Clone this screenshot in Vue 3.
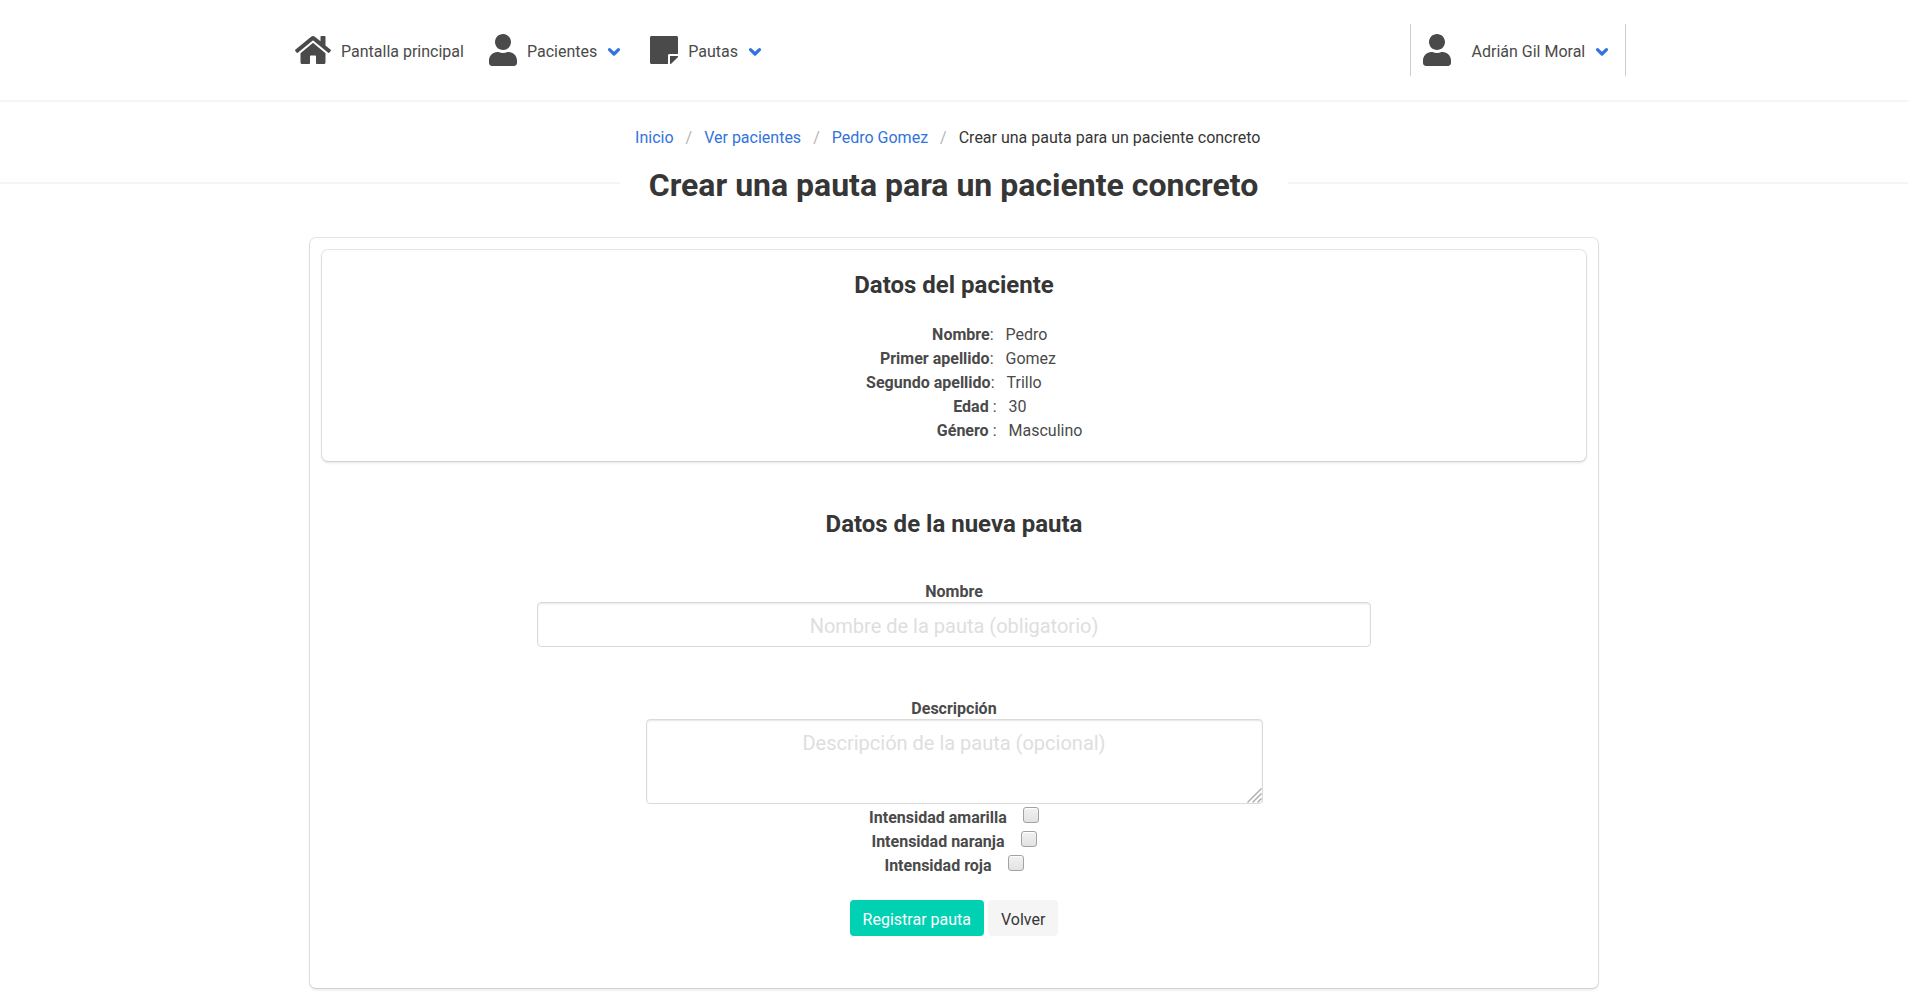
<script setup>
const icons = {
  home: {
    w: 576,
    d: 'M488 312.7V456c0 13.3-10.7 24-24 24H348c-6.6 0-12-5.4-12-12V356c0-6.6-5.4-12-12-12h-72c-6.6 0-12 5.4-12 12v112c0 6.6-5.4 12-12 12H112c-13.3 0-24-10.7-24-24V312.7c0-3.6 1.6-7 4.4-9.3l188-154.8c4.4-3.6 10.8-3.6 15.3 0l188 154.8c2.7 2.3 4.3 5.7 4.3 9.3zm83.6-60.9L488 182.9V44.4c0-6.6-5.4-12-12-12h-56c-6.6 0-12 5.4-12 12V117l-89.5-73.7c-17.7-14.6-43.3-14.6-61 0L4.4 251.8c-5.1 4.2-5.8 11.8-1.6 16.9l25.5 31c4.2 5.1 11.8 5.8 16.9 1.6l235.2-193.7c4.4-3.6 10.8-3.6 15.3 0l235.2 193.7c5.1 4.2 12.7 3.5 16.9-1.6l25.5-31c4.2-5.2 3.4-12.7-1.7-16.9z',
  },
  user: {
    w: 448,
    d: 'M224 256c70.7 0 128-57.3 128-128S294.7 0 224 0 96 57.3 96 128s57.3 128 128 128zm89.6 32h-16.7c-22.2 10.2-46.9 16-72.9 16s-50.6-5.8-72.9-16h-16.7C60.2 288 0 348.2 0 422.4V464c0 26.5 21.5 48 48 48h352c26.5 0 48-21.5 48-48v-41.6c0-74.2-60.2-134.4-134.4-134.4z',
  },
  note: {
    w: 448,
    d: 'M312 320h136V56c0-13.3-10.7-24-24-24H24C10.7 32 0 42.7 0 56v400c0 13.3 10.7 24 24 24h264V344c0-13.2 10.8-24 24-24zm129 55l-98 98c-4.5 4.5-10.6 7-17 7h-6V352h128v6.1c0 6.3-2.5 12.4-7 16.9z',
  },
}

const menu = [
  { text: 'Pantalla principal', icon: 'home', arrow: false },
  { text: 'Pacientes', icon: 'user', arrow: true },
  { text: 'Pautas', icon: 'note', arrow: true },
]

const crumbs = ['Inicio', 'Ver pacientes', 'Pedro Gomez']

const patient = [
  { label: 'Nombre', sep: ':', value: 'Pedro', end: 993.5 },
  { label: 'Primer apellido', sep: ':', value: 'Gomez', end: 993.5 },
  { label: 'Segundo apellido', sep: ':', value: 'Trillo', end: 994.5 },
  { label: 'Edad', sep: ' :', value: '30', end: 996.5 },
  { label: 'Género', sep: ' :', value: 'Masculino', end: 996.5 },
]

const intensities = ['amarilla', 'naranja', 'roja']
</script>

<template>
  <div class="page">
    <nav class="navbar">
      <div class="container">
        <a v-for="m in menu" :key="m.text" class="item" :class="m.icon">
          <svg class="icon" :viewBox="`0 0 ${icons[m.icon].w} 512`"><path :d="icons[m.icon].d" /></svg>
          <span>{{ m.text }}</span>
          <svg v-if="m.arrow" class="arrow" viewBox="0 0 14 10"><path d="M2.5 2.6L7 7L11.5 2.6" /></svg>
        </a>
        <a class="item account">
          <svg class="icon" viewBox="0 0 448 512"><path :d="icons.user.d" /></svg>
          <span>Adrián Gil Moral</span>
          <svg class="arrow" viewBox="0 0 14 10"><path d="M2.5 2.6L7 7L11.5 2.6" /></svg>
        </a>
      </div>
    </nav>

    <ul class="breadcrumb">
      <li v-for="c in crumbs" :key="c"><a>{{ c }}</a></li>
      <li class="active">Crear una pauta para un paciente concreto</li>
    </ul>

    <header class="heading">
      <hr />
      <h1>Crear una pauta para un paciente concreto</h1>
      <hr />
    </header>

    <main class="box outer">
      <section class="box patient">
        <h2>Datos del paciente</h2>
        <div v-for="p in patient" :key="p.label" class="row">
          <div class="label" :style="{ width: p.end - 322 + 'px' }"><b>{{ p.label }}</b>{{ p.sep }}</div>
          <div class="value">{{ p.value }}</div>
        </div>
      </section>

      <form class="form" @submit.prevent>
        <h2>Datos de la nueva pauta</h2>
        <label class="caption name-caption">Nombre</label>
        <input class="input" type="text" placeholder="Nombre de la pauta (obligatorio)" />
        <label class="caption desc-caption">Descripción</label>
        <div class="area">
          <textarea class="input" placeholder="Descripción de la pauta (opcional)"></textarea>
          <svg class="grip" viewBox="0 0 15 15"><path d="M0.5 14.5L14.5 0.5M5.5 14.5L14.5 5.5M10.5 14.5L14.5 10.5" /></svg>
        </div>
        <label v-for="i in intensities" :key="i" class="check">
          <b>Intensidad {{ i }}</b>
          <input type="checkbox" />
        </label>
        <div class="buttons">
          <button class="button primary">Registrar pauta</button>
          <button class="button">Volver</button>
        </div>
      </form>
    </main>
  </div>
</template>

<style>
html {
  background: #fff;
  overflow: hidden;
}
</style>

<style scoped>
.page {
  width: 1908px;
  height: 1000px;
  font: 16px/24px Roboto, sans-serif;
  color: #4a4a4a;
}
.page * {
  box-sizing: border-box;
}
.navbar {
  height: 100px;
  box-shadow: 0 2px 0 0 #f5f5f5;
}
.container {
  width: 1344px;
  height: 100px;
  margin: 0 auto;
  display: flex;
  align-items: center;
}
.item {
  display: flex;
  align-items: center;
  height: 52px;
  padding: 0 12px 0 13px;
  white-space: nowrap;
}
.item span {
  padding-top: 3px;
}
.icon {
  display: block;
  width: 28px;
  height: 32px;
  margin-right: 10px;
  fill: #4a4a4a;
}
.home .icon {
  width: 36px;
}
.arrow {
  width: 14px;
  height: 10px;
  margin: 3px -2px 0 10px;
  fill: none;
  stroke: #3273dc;
  stroke-width: 3.2;
  stroke-linecap: round;
  stroke-linejoin: round;
}
.user,
.note {
  padding-right: 18px;
}
.account {
  width: 216px;
  margin-left: auto;
  border-left: 1px solid #ccc;
  border-right: 1px solid #ccc;
  padding: 0 0 0 12px;
}
.account .icon {
  margin-right: 20.5px;
}
.breadcrumb {
  list-style: none;
  margin: 0;
  padding: 26px 12.5px 0 0;
  display: flex;
  justify-content: center;
  height: 62px;
}
.breadcrumb li {
  padding: 0 12px 0 0;
}
.breadcrumb li:last-child {
  padding: 0;
}
.breadcrumb li + li::before {
  content: '/';
  color: #b5b5b5;
  margin-right: 12px;
}
.breadcrumb a {
  color: #3273dc;
}
.active {
  color: #363636;
}
.heading {
  display: flex;
  height: 44px;
}
.heading hr {
  flex: 1;
  height: 2px;
  margin: 20px 0 0;
  border: 0;
  background: #f5f5f5;
}
h1 {
  margin: 0;
  width: 668px;
  padding-right: 1px;
  text-align: center;
  font-size: 32px;
  line-height: 46px;
  font-weight: 700;
  color: #363636;
}
h2 {
  margin: 0;
  text-align: center;
  font-size: 24px;
  line-height: 28px;
  font-weight: 700;
  color: #363636;
}
.box {
  border-radius: 6px;
  background: #fff;
  box-shadow: 0 2px 3px rgba(10, 10, 10, 0.1), 0 0 0 1px rgba(10, 10, 10, 0.1);
}
.outer {
  width: 1288px;
  height: 750px;
  margin: 32px auto 0;
  padding: 12px;
}
.patient {
  height: 211px;
  padding-top: 21px;
}
.patient h2 {
  margin-bottom: 24px;
}
.row {
  display: flex;
  height: 24px;
}
.label {
  text-align: right;
  white-space: pre;
}
.value {
  margin-left: 12px;
}
.form {
  display: flex;
  flex-direction: column;
  align-items: center;
  padding-top: 49px;
}
.caption {
  font-weight: 700;
  margin-bottom: -2px;
}
.name-caption {
  margin-top: 42px;
}
.desc-caption {
  margin-top: 50px;
}
.input {
  display: block;
  width: 834px;
  height: 45px;
  padding: 7px 15px 5px;
  border: 1px solid #dbdbdb;
  border-radius: 4px;
  box-shadow: inset 0 1px 2px rgba(10, 10, 10, 0.1);
  font: 20px/30px Roboto, sans-serif;
  text-align: center;
  background: #fff;
  outline: none;
}
.input::placeholder {
  color: #dedede;
  opacity: 1;
}
.area {
  position: relative;
}
.area .input {
  width: 617px;
  height: 85px;
  padding-top: 8px;
  resize: none;
  overflow: hidden;
}
.grip {
  position: absolute;
  right: 1px;
  bottom: 1px;
  width: 15px;
  height: 15px;
  fill: none;
  stroke: #aaa;
  stroke-width: 1.4;
}
.check {
  display: flex;
  height: 24px;
}
.check b {
  padding-top: 2px;
}
.check input {
  appearance: none;
  width: 16px;
  height: 16px;
  margin: 3px 0 0 16px;
  border: 1px solid #a2a2a2;
  border-radius: 3px;
  background: linear-gradient(#f2f2f2, #e2e2e2);
  box-shadow: inset 0 1px 0 #fff;
}
.buttons {
  display: flex;
  gap: 4px;
  margin-top: 24px;
}
.button {
  height: 36px;
  padding: 3px 12px 0;
  border: 1px solid transparent;
  border-radius: 4px;
  font: 16px/24px Roboto, sans-serif;
  background: #f5f5f5;
  color: #363636;
}
.primary {
  background: #00d1b2;
  color: #fff;
}
</style>
